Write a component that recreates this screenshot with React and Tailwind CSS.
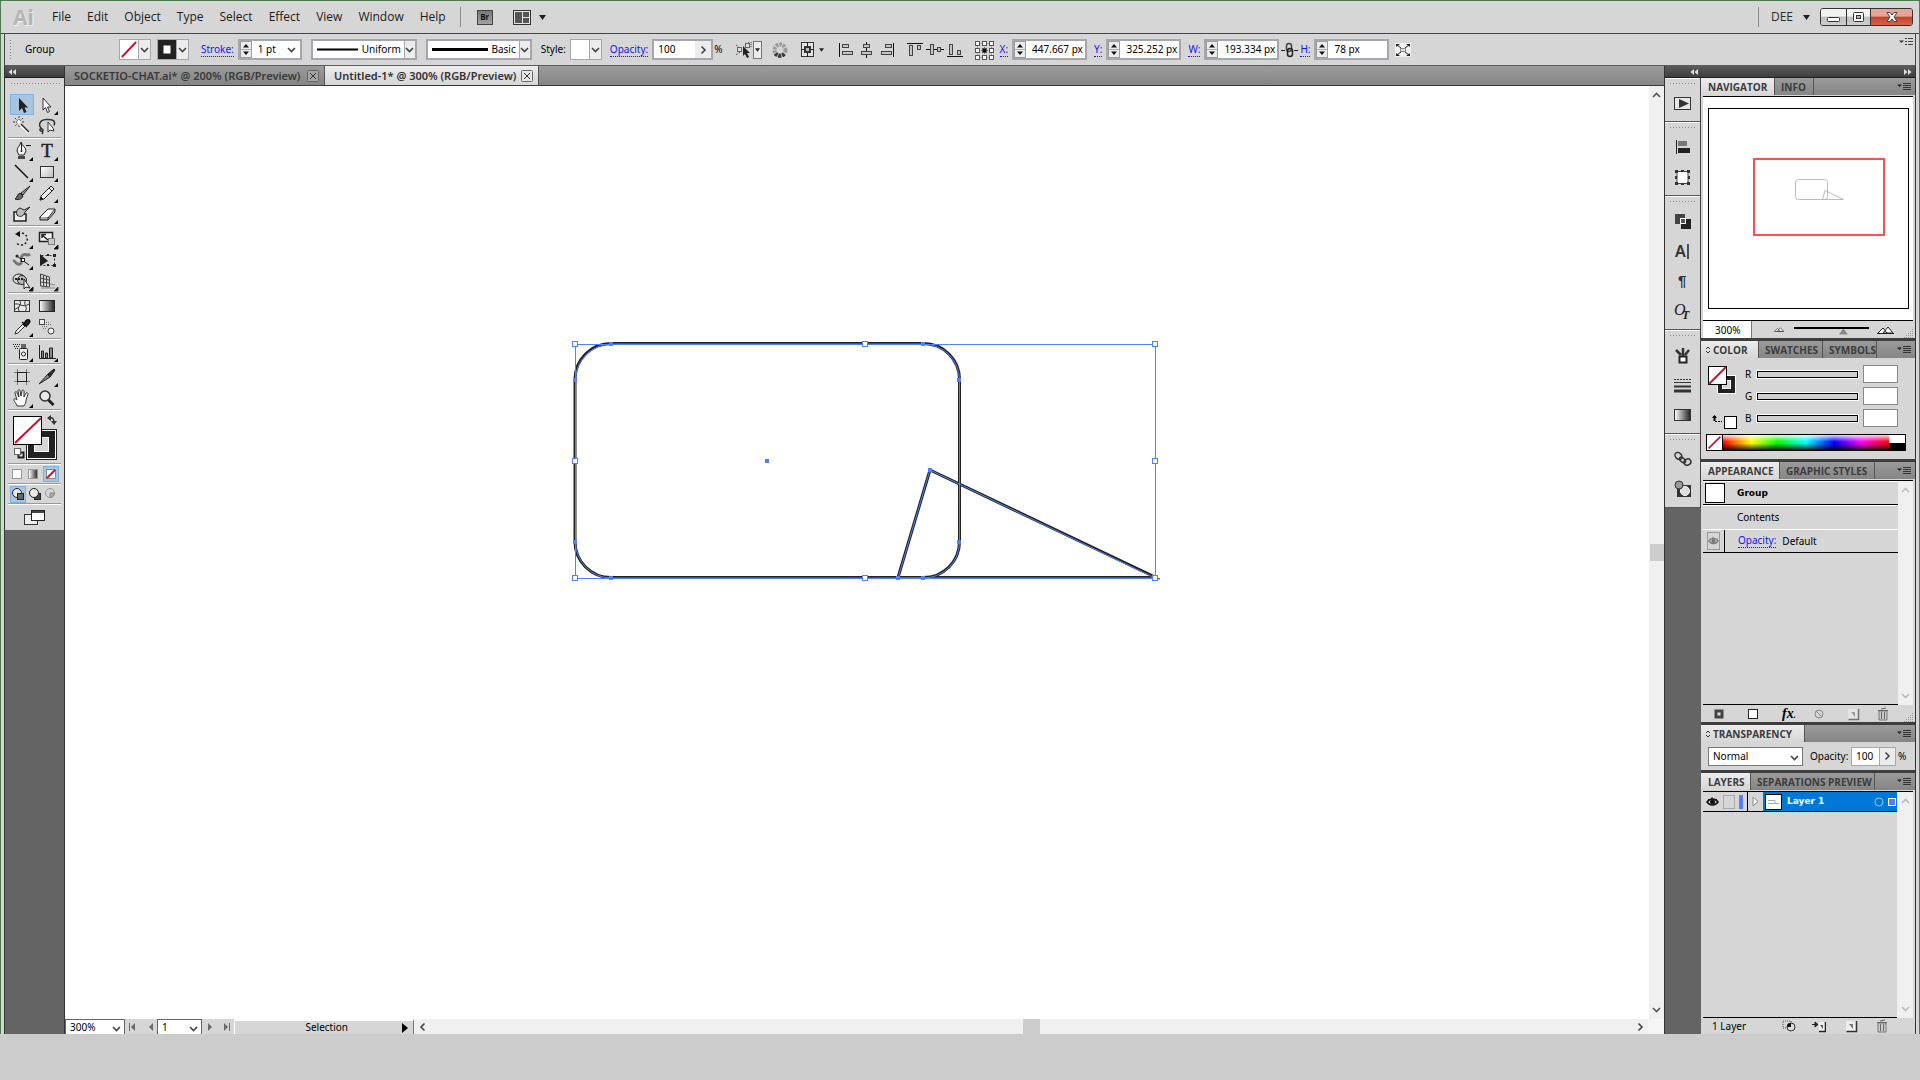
import React, { useState } from 'react';

const inputBase = 'bg-white border-2 border-[#a6a6ae] h-[21px] text-[10px] text-black outline-none';
const uiFont = "font-['Noto_Sans',sans-serif]";

/* ---------- small shared pieces ---------- */

const Chevron = ({ className = '', color = '#444' }) => (
  <svg width="9" height="6" viewBox="0 0 9 6" className={className} fill="none">
    <path d="M1 1l3.500 3.500L8 1" stroke={color} strokeWidth="1.600" />
  </svg>
);

const Caret = ({ small, className = '' }) => (
  <svg width={small ? 5 : 7} height={small ? 4 : 5} viewBox="0 0 7 5" className={className}>
    <path d="M0 0h7L3.500 5z" fill="#222" />
  </svg>
);

const Grip = ({ className = '' }) => (
  <div className={`bg-[radial-gradient(circle,#8c8c8c_1px,transparent_1px)] bg-[length:3px_3px] ${className}`}></div>
);

const PanelLabel = ({ children, htmlFor, className = '' }) => (
  <label htmlFor={htmlFor} className={`text-[10px] leading-[13px] text-[#1414f0] border-b border-dotted border-[#1414f0] ${className}`}>
    {children}
  </label>
);

const Spinner = () => (
  <span className="w-3 h-[17px] bg-[#ececec] border border-[#9c9ca0] shrink-0 flex">
    <svg viewBox="0 0 10 15" className="w-full h-full">
      <path d="M0 7.500h10" stroke="#b0b0b0" />
      <path d="M2 5.500h6L5 2zM2 9.500h6L5 13z" fill="#111" />
    </svg>
  </span>
);

const NumberField = ({ id, label, value }) => (
  <div className="flex items-center gap-1">
    <PanelLabel htmlFor={id}>{label}</PanelLabel>
    <div className={`${inputBase} w-[75px] flex items-center`}>
      <Spinner />
      <input id={id} defaultValue={value} className="w-0 flex-1 pl-1.5 outline-none" />
    </div>
  </div>
);

const DropButton = ({ label, children }) => (
  <button aria-label={label} className="w-8 h-[21px] bg-white border border-[#a6a6ae] flex">
    <span className="w-[19px] h-full border-r border-[#a6a6ae]">{children}</span>
    <span className="flex-1 h-full bg-[#ececec] flex items-center justify-center">
      <Chevron />
    </span>
  </button>
);

const StrokeCombo = ({ label, option, weight, lineWidth }) => (
  <div className="relative w-[106px] h-[21px] ml-[9px]">
    <select aria-label={label} className="appearance-none w-full h-full bg-white border-2 border-[#a6a6ae] text-[10px] text-right pr-3.5 outline-none">
      <option>{option}</option>
    </select>
    <svg width="62" height="5" className="absolute left-1.5 top-2 pointer-events-none">
      <path d={`M0 2.500h${lineWidth}`} stroke="#000" strokeWidth={weight} />
    </svg>
    <span className="absolute right-0.5 top-0.5 w-[11px] h-[17px] bg-[#ececec] border-l border-[#a6a6ae] flex items-center justify-center pointer-events-none">
      <Chevron />
    </span>
  </div>
);

const Separator = ({ className = '' }) => (
  <div className={`h-0.5 border-t border-[#9a9a9a] bg-white shrink-0 ${className}`}></div>
);

const Flyout = () => <path d="M22 16v4h-4z" fill="#000" />;

/* ---------- toolbox icons, 22 x 20 ---------- */

const toolIcons = {
  selection: <path d="M8 3v13l3-3 2 5 2.500-1-2-4.500H17z" fill="#222" />,
  direct: (
    <g>
      <path d="M7 3v12l2.500-2.500 2 5 2-1-2-4.500H15z" fill="#fff" stroke="#333" />
      <Flyout />
    </g>
  ),
  wand: (
    <g fill="none">
      <path d="M8 0v12M2 6h12M4 2l8 8M12 2l-8 8" stroke="#333" strokeDasharray="2 1" />
      <circle cx="8" cy="6" r="2" fill="#fff" />
      <path d="M9 8l9 9" stroke="#fff" strokeWidth="3" />
      <path d="M10 8l8 8" stroke="#222" strokeWidth="1.500" />
    </g>
  ),
  lasso: (
    <g fill="none" stroke="#333">
      <path d="M6 13C2 10 3 4 10 3.500S20 5 18 9.500M6 13c-2-1-3 1-1 2s3-1 1-2M5 15c2 0 2 2 1 3" strokeWidth="1.500" />
      <path d="M12 6v10l2-2 4 1-1-3z" fill="#fff" />
    </g>
  ),
  pen: (
    <g>
      <path d="M10 1c-1 4-4 5-4 9l2 4h5l2-4c0-4-4-5-5-9z" fill="#f4f4f4" stroke="#222" />
      <path d="M10.500 2v7" stroke="#222" />
      <circle cx="10.500" cy="10" r="1" fill="#222" />
      <path d="M7 15h7v3H7z" fill="#444" />
      <path d="M15 4.500h5" stroke="#111" />
      <Flyout />
    </g>
  ),
  type: (
    <g>
      <text x="11" y="16" textAnchor="middle" fontFamily="Liberation Serif" fontSize="19" fill="#222" stroke="#222" strokeWidth="0.500">T</text>
      <Flyout />
    </g>
  ),
  line: (
    <g>
      <path d="M4 3l13 13" stroke="#111" strokeWidth="1.500" />
      <Flyout />
    </g>
  ),
  rect: (
    <g>
      <rect x="4.500" y="4.500" width="13" height="11" fill="url(#toolShade)" stroke="#333" />
      <Flyout />
    </g>
  ),
  brush: (
    <g>
      <path d="M19 3l-9 7 2 2z" fill="#999" stroke="#222" />
      <path d="M9 10l3 3c-1 4-6 4-8 3 2-1 2-5 5-6z" fill="#666" stroke="#222" />
    </g>
  ),
  pencil: (
    <g>
      <path d="M4 17l1-4L15 3l3 3L8 16z" fill="#eee" stroke="#222" />
      <path d="M4 17l1-3 2 2zM13 5l3 3" fill="#111" stroke="#222" />
      <Flyout />
    </g>
  ),
  blob: (
    <g>
      <path d="M3 8h6v2h6v7H3z" fill="#eee" stroke="#222" strokeWidth="1.500" />
      <path d="M9 4c-3 1-4 4-3 7 3 3 7 1 8-3l5-5-6 3z" fill="#bbb" stroke="#222" />
    </g>
  ),
  eraser: (
    <g>
      <path d="M4 13l8-8h7l-7 9H4z" fill="#fff" stroke="#222" />
      <path d="M4 13v3h8v-3M12 16l7-8V5" fill="#aaa" stroke="#222" />
      <Flyout />
    </g>
  ),
  rotate: (
    <g fill="none">
      <path d="M7 5a6 6 0 1 1-2 8" stroke="#222" strokeWidth="1.500" strokeDasharray="2 2" />
      <path d="M4 5l5-3v6z" fill="#111" />
      <Flyout />
    </g>
  ),
  scale: (
    <g fill="none" stroke="#222">
      <rect x="3.500" y="3.500" width="13" height="9" fill="#f2f2f2" strokeWidth="1.500" />
      <rect x="12.500" y="9.500" width="6" height="6" fill="#ccc" stroke="#777" />
      <path d="M6 6l6 5M6 9V5.500h4" strokeWidth="1.500" />
      <Flyout />
    </g>
  ),
  warp: (
    <g fill="none">
      <path d="M2 11c3-1 3 5 7 3s-1-7 3-9 3 2 7-1" stroke="#777" strokeWidth="3" />
      <path d="M6 6l12 9" stroke="#111" />
      <rect x="10.500" y="8.500" width="3" height="3" fill="#fff" stroke="#222" />
      <circle cx="6" cy="6" r="1.500" fill="#222" />
      <Flyout />
    </g>
  ),
  transform: (
    <g>
      <rect x="5.500" y="5.500" width="13" height="10" fill="none" stroke="#333" strokeDasharray="2 2" />
      <path d="M17 4h3v3h-3zM17 14h3v3h-3zM11 4h2v2h-2zM11 14h2v2h-2z" fill="#222" />
      <path d="M4 4v12l8-5z" fill="#222" />
    </g>
  ),
  builder: (
    <g fill="none" stroke="#222">
      <ellipse cx="8" cy="8" rx="6" ry="5" fill="#ddd" />
      <circle cx="11" cy="9" r="4.500" fill="#bbb" />
      <path d="M4 8h9" strokeWidth="2" strokeDasharray="2 1" />
      <path d="M13 8v10l2-2 4 1z" fill="#fff" />
      <Flyout />
    </g>
  ),
  perspective: (
    <g fill="none" stroke="#444">
      <path d="M4.500 3v12l9 1V6zM7.500 4v11M10.500 5v11M4 7l9 2M4 11l9 1" />
      <path d="M5 17h14M14 13l5 1" stroke="#888" />
      <Flyout />
    </g>
  ),
  mesh: (
    <g fill="none" stroke="#333">
      <rect x="3.500" y="4.500" width="15" height="11" fill="#e8e8e8" />
      <path d="M3 9c4-4 8 4 15-1M8 4c5 5-4 7 1 12M15 4c-4 5 3 6-1 12M3 14l5-3" />
    </g>
  ),
  gradient: <rect x="3.500" y="4.500" width="15" height="11" fill="url(#toolGradient)" stroke="#222" />,
  dropper: (
    <g>
      <path d="M4 17l1-3 7-7 2 2-7 7z" fill="#eee" stroke="#333" />
      <path d="M11 5l5 5M13 8c0-3 3-6 5-5s0 4-3 6z" fill="#222" stroke="#111" strokeWidth="1.500" />
      <Flyout />
    </g>
  ),
  blend: (
    <g>
      <rect x="3.500" y="2.500" width="5" height="5" fill="#eee" stroke="#444" />
      <path d="M6 9.500h6M7 11.500h4M10 5.500h3M10 7.500h5" stroke="#777" strokeDasharray="1 1" />
      <circle cx="15" cy="14" r="3" fill="#eee" stroke="#444" />
    </g>
  ),
  spray: (
    <g>
      <path d="M2 2.500h7M3 4.500h6M4 6.500h4" stroke="#222" strokeDasharray="1 1" />
      <rect x="8.500" y="6.500" width="8" height="11" rx="1" fill="#eee" stroke="#222" />
      <rect x="10" y="2" width="5" height="4" fill="#666" />
      <circle cx="12.500" cy="12" r="2" fill="#fff" stroke="#222" />
      <Flyout />
    </g>
  ),
  graph: (
    <g>
      <path d="M3.500 3v13.500H20" fill="none" stroke="#222" />
      <path d="M5.500 9h2v7h-2zM9.500 11h2v5h-2zM13.500 6h3v10h-3z" fill="#888" stroke="#222" />
      <Flyout />
    </g>
  ),
  artboard: (
    <g fill="none">
      <rect x="6.500" y="5.500" width="9" height="9" stroke="#222" />
      <path d="M6.500 2v3M15.500 2v3M6.500 15v3M15.500 15v3M3 5.500h3M3 14.500h3M16 5.500h3M16 14.500h3" stroke="#777" />
    </g>
  ),
  slice: (
    <g>
      <path d="M3 17L12 7l2 3z" fill="#888" stroke="#222" />
      <path d="M12 7l6-5 1 1-5 7z" fill="#333" stroke="#111" />
      <Flyout />
    </g>
  ),
  hand: (
    <g>
      <path d="M6 18c-1-3-4-6-3-7s3 1 3 1L4 5c0-2 2-2 2 0l2 4-1-6c0-2 2-2 2 0l1 5 1-5c0-2 2-1 2 0v6l2-4c1-1 2 0 2 1l-2 6c0 3-1 4-2 6z" fill="#fff" stroke="#333" />
      <Flyout />
    </g>
  ),
  zoom: (
    <g fill="none">
      <circle cx="9" cy="8" r="5" fill="#e8e8e8" stroke="#333" strokeWidth="1.500" />
      <path d="M12.500 12l5 5" stroke="#222" strokeWidth="3" />
    </g>
  ),
};

const toolGroups = [
  ['selection', 'direct', 'wand', 'lasso'],
  ['pen', 'type', 'line', 'rect', 'brush', 'pencil', 'blob', 'eraser'],
  ['rotate', 'scale', 'warp', 'transform', 'builder', 'perspective'],
  ['mesh', 'gradient', 'dropper', 'blend'],
  ['spray', 'graph'],
  ['artboard', 'slice', 'hand', 'zoom'],
];

/* ---------- menu bar ---------- */

const menus = ['File', 'Edit', 'Object', 'Type', 'Select', 'Effect', 'View', 'Window', 'Help'];

const MenuBar = () => (
  <header className="h-[33px] border-b border-[#46464a] flex items-center pl-3 pr-1.5 font-['Open_Sans',sans-serif]">
    <span className="w-8 text-[21px] leading-none font-bold text-[#b4b4b4] [text-shadow:1px_1px_0_#f0f0f0]">Ai</span>
    <nav className="flex ml-[7px] gap-4 text-[12px] leading-4 text-[#1c1c1c]">
      {menus.map((name) => (
        <button key={name}>{name}</button>
      ))}
    </nav>
    <div className="w-px h-5 bg-[#8e8e8e] ml-3.5"></div>
    <button className="ml-4 w-4 h-[15px] bg-[linear-gradient(#777,#a2a2a2)] border border-[#444] text-[8px] leading-none font-bold text-[#111]">Br</button>
    <button aria-label="Arrange documents" className="ml-5 flex items-center gap-2">
      <svg width="18" height="15" viewBox="0 0 18 15">
        <rect x="0.500" y="0.500" width="17" height="14" fill="#e4e4e4" stroke="#333" />
        <path d="M2 2h7v11H2zM10 2h6v5h-6zM10 8h6v5h-6z" fill="#555" />
      </svg>
      <Caret />
    </button>
    <div className="flex-1"></div>
    <div className="w-px h-5 bg-[#8e8e8e]"></div>
    <button className="ml-3 flex items-center gap-2.5 text-[12px] leading-4 text-[#2c2c2c]">
      DEE <Caret />
    </button>
    <div className="ml-2.5 h-[18px] flex border border-[#333] rounded-[3px] overflow-hidden">
      <button aria-label="Minimize" className="w-[25px] bg-[linear-gradient(#f2f2f2_45%,#bdbdbd_50%,#d0d0d0)] flex items-center justify-center">
        <svg width="13" height="14"><rect x="0.500" y="7.500" width="12" height="4" rx="1" fill="#fff" stroke="#333" /></svg>
      </button>
      <button aria-label="Restore" className="w-[25px] border-x border-[#333] bg-[linear-gradient(#f2f2f2_45%,#bdbdbd_50%,#d0d0d0)] flex items-center justify-center">
        <svg width="13" height="12">
          <rect x="1.500" y="1.500" width="10" height="9" rx="1" fill="#fff" stroke="#333" />
          <rect x="4.500" y="4.500" width="4" height="3" fill="#bbb" stroke="#333" />
        </svg>
      </button>
      <button aria-label="Close" className="w-[41px] bg-[linear-gradient(#e9a493_45%,#c4422c_50%,#d4634a)] flex items-center justify-center">
        <svg width="14" height="12" viewBox="0 0 14 12">
          <path d="M2 1.500h3l2 2.500 2-2.500h3L9 6l3 4.500H9L7 8l-2 2.500H2L5 6z" fill="#fff" stroke="#444" />
        </svg>
      </button>
    </div>
  </header>
);

/* ---------- control bar ---------- */

const NoneLine = () => (
  <svg viewBox="0 0 19 19" preserveAspectRatio="none" className="w-full h-full">
    <path d="M2 17L17 2" stroke="#c8102e" strokeWidth="2" />
  </svg>
);

const AlignIcon = ({ kind }) => {
  const shapes = {
    left: ['M1.500 2v14', [4, 3, 7, 4], [4, 10, 11, 4]],
    hcenter: ['M8.500 1v16', [5, 3, 7, 4], [3, 10, 11, 4]],
    right: ['M15.500 2v14', [7, 3, 7, 4], [3, 10, 11, 4]],
    top: ['M1 2.500h16', [3, 4, 4, 11], [11, 4, 4, 5]],
    vcenter: ['M0 8.500h18', [4, 3, 4, 11], [11, 6, 4, 5]],
    bottom: ['M1 15.500h16', [3, 3, 4, 11], [11, 9, 4, 5]],
  };
  const [line, a, b] = shapes[kind];
  return (
    <button aria-label={`Align ${kind}`}>
      <svg width="18" height="18" viewBox="0 0 18 18">
        <path d={line} stroke="#111" />
        {[a, b].map(([x, y, w, h], i) => (
          <rect key={i} x={x + 0.5} y={y + 0.5} width={w - 1} height={h - 1} fill="#c4c4c4" stroke="#444" />
        ))}
      </svg>
    </button>
  );
};

const refPoints = [1, 8, 15];

const ControlBar = () => (
  <div className={`h-8 border-b border-[#5c5c5c] border-l border-l-[#46464a] border-r border-r-[#46464a] mx-[3px] flex items-center text-[10px] leading-[13px] text-black ${uiFont}`}>
    <Grip className="w-[3px] h-[21px] ml-1" />
    <span className="w-[94px] ml-[13px]">Group</span>
    <DropButton label="Fill"><NoneLine /></DropButton>
    <div className="w-1.5"></div>
    <DropButton label="Stroke color">
      <svg viewBox="0 0 18 19" className="w-full h-full">
        <rect width="18" height="19" fill="#222" />
        <rect x="5.500" y="5.500" width="7" height="8" fill="#fff" />
      </svg>
    </DropButton>
    <PanelLabel htmlFor="stroke" className="ml-3">Stroke:</PanelLabel>
    <div className={`${inputBase} w-16 ml-1 flex items-center relative`}>
      <Spinner />
      <select id="stroke" className="appearance-none flex-1 pl-1.5 outline-none">
        <option>1 pt</option>
      </select>
      <Chevron className="absolute right-1 pointer-events-none" />
    </div>
    <StrokeCombo label="Width profile" option="Uniform" weight="2" lineWidth={41} />
    <StrokeCombo label="Brush definition" option="Basic" weight="3" lineWidth={56} />
    <span className="ml-[9px] mr-1">Style:</span>
    <DropButton label="Graphic style" />
    <PanelLabel htmlFor="opacity" className="ml-2">Opacity:</PanelLabel>
    <div className={`${inputBase} w-[61px] ml-1 flex items-center`}>
      <input id="opacity" defaultValue="100" className="w-0 flex-1 pl-1 outline-none" />
      <button aria-label="Opacity slider" className="w-4 h-full bg-[#ececec] flex items-center justify-center">
        <Chevron className="-rotate-90" />
      </button>
    </div>
    <span className="ml-px">%</span>

    <button aria-label="Select similar" className="ml-3 flex items-center">
      <svg width="18" height="18" viewBox="0 0 18 18">
        <path d="M1 4l4 3M13 1l2 2M1 14l4-3M16 1v5" stroke="#333" strokeDasharray="1 1" />
        <rect x="2.500" y="6.500" width="4" height="4" fill="#ddd" stroke="#666" />
        <rect x="10.500" y="2.500" width="4" height="4" fill="#ddd" stroke="#666" />
        <path d="M8 5v10l2-2 2 4 2-1-2-4h3z" fill="#222" />
      </svg>
      <span className="w-[9px] h-[18px] border border-[#777] bg-[#ececec] flex items-center justify-center"><Caret small /></span>
    </button>
    <button aria-label="Recolor artwork" className="ml-2.5">
      <svg width="16" height="16" viewBox="0 0 16 16">
        <circle cx="8" cy="8" r="5.500" fill="none" stroke="#999" strokeWidth="4" strokeDasharray="2.500 1" />
        <path d="M3.500 11.500a5.500 5.500 0 0 0 9 0" fill="none" stroke="#333" strokeWidth="4" strokeDasharray="2.500 1" />
      </svg>
    </button>
    <button aria-label="Align to" className="ml-3 flex items-center gap-1">
      <svg width="15" height="17" viewBox="0 0 15 17">
        <rect x="1.500" y="1.500" width="12" height="14" fill="#e4e4e4" stroke="#333" />
        <rect x="5" y="6" width="5" height="5" fill="#bbb" stroke="#333" strokeWidth="2" />
        <path d="M7.500 1v4M7.500 12v4M1 8.500h3M11 8.500h3" stroke="#222" />
      </svg>
      <Caret small />
    </button>
    <div className="flex ml-3.5 gap-0.5">
      <AlignIcon kind="left" />
      <AlignIcon kind="hcenter" />
      <AlignIcon kind="right" />
    </div>
    <div className="flex ml-2.5 gap-0.5">
      <AlignIcon kind="top" />
      <AlignIcon kind="vcenter" />
      <AlignIcon kind="bottom" />
    </div>
    <button aria-label="Reference point" className="ml-2.5 mr-1.5">
      <svg width="20" height="20" viewBox="0 0 20 20">
        <path d="M3.500 3.500h14v14h-14zM3 10.500h15M10.500 3v15" fill="none" stroke="#777" strokeDasharray="1 1" />
        {refPoints.map((y) =>
          refPoints.map((x) => (
            <rect key={`${x}-${y}`} x={x + 0.5} y={y + 0.5} width="4" height="4" fill={x === 8 && y === 8 ? '#000' : '#fff'} stroke="#555" />
          ))
        )}
      </svg>
    </button>
    <div className="flex items-center gap-[7px]">
      <NumberField id="pos-x" label="X:" value="447.667 px" />
      <NumberField id="pos-y" label="Y:" value="325.252 px" />
      <NumberField id="size-w" label="W:" value="193.334 px" />
    </div>
    <button aria-label="Constrain proportions" className="mx-0.5">
      <svg width="17" height="16" viewBox="0 0 17 16" fill="none">
        <path d="M0 8.500h4M13 8.500h4" stroke="#222" />
        <rect x="5.500" y="1.500" width="5" height="8" rx="2.500" stroke="#444" strokeWidth="1.500" />
        <rect x="6.500" y="6.500" width="5" height="8" rx="2.500" stroke="#222" strokeWidth="1.500" />
      </svg>
    </button>
    <NumberField id="size-h" label="H:" value="78 px" />
    <button aria-label="Isolate" className="ml-1.5 w-4 h-[14px] bg-[#f2f2f2]">
      <svg width="16" height="14" viewBox="0 0 16 14">
        <path d="M2 2l4 3M14 2l-4 3M2 12l4-3M14 12l-4-3" stroke="#222" />
        <path d="M1 1h4L1 4zM15 1h-4l4 3zM1 13h4l-4-3zM15 13h-4l4-3z" fill="#222" />
        <rect x="5.500" y="5.500" width="5" height="3" fill="#ddd" stroke="#888" />
      </svg>
    </button>
    <div className="flex-1"></div>
    <button aria-label="Control bar menu" className="self-start mt-1 mr-0.5">
      <svg width="14" height="8" viewBox="0 0 14 8">
        <path d="M0 2.500h5L2.500 5z" fill="#333" />
        <path d="M6 0.500h2M6 3.500h2M6 6.500h2M9 0.500h5M9 3.500h5M9 6.500h5" stroke="#444" />
      </svg>
    </button>
  </div>
);

/* ---------- toolbox ---------- */

const CollapseBar = ({ right, className = '' }) => (
  <div className={`h-3 shrink-0 bg-[linear-gradient(#5c5c5c,#3e3e3e)] border-b border-[#1e1e1e] flex items-center ${className}`}>
    <button aria-label="Collapse panel">
      <svg width="8" height="6" viewBox="0 0 8 6" className={right ? 'rotate-180' : ''}>
        <path d="M4 0v6L0.500 3zM8 0v6L4.500 3z" fill="#ddd" />
      </svg>
    </button>
  </div>
);

const Toolbox = () => {
  const [active, setActive] = useState('selection');

  return (
    <aside className="w-[61px] shrink-0 border-x border-[#333] bg-[#646464] flex flex-col">
      <CollapseBar className="pl-[3px]" />
      <div className="bg-[#d6d6d6] px-[5px] pt-1 pb-1">
        <Grip className="h-[3px] w-[51px] mb-[9px]" />
        {toolGroups.map((group, i) => (
          <div key={i}>
            {i > 0 && <Separator className="-mx-0.5 my-px" />}
            <div className="grid grid-cols-[24px_24px] gap-x-px">
              {group.map((name) => (
                <button
                  key={name}
                  aria-label={name}
                  onClick={() => setActive(name)}
                  className={`h-[21px] flex items-center justify-center ${active === name ? 'bg-[#a9c4de] outline outline-1 -outline-offset-1 outline-[#7cb4e8]' : ''}`}
                >
                  <svg width="22" height="20" viewBox="0 0 22 20" className="overflow-visible">{toolIcons[name]}</svg>
                </button>
              ))}
            </div>
          </div>
        ))}
        <Separator className="-mx-0.5 my-px" />
        <button aria-label="Fill and stroke" className="block">
          <svg width="49" height="51" viewBox="10 412 49 51">
            <rect x="26.500" y="429.500" width="30" height="30" fill="#222" stroke="#222" />
            <rect x="27.500" y="430.500" width="28" height="28" fill="none" stroke="#fff" />
            <rect x="34.500" y="437.500" width="14" height="14" fill="#d6d6d6" stroke="#fff" />
            <rect x="13.500" y="416.500" width="28" height="28" fill="#fff" stroke="#000" />
            <path d="M15 443l26-25" stroke="#c8102e" strokeWidth="2" />
            <path d="M49 418c4-1 5 1 5 5" fill="none" stroke="#333" strokeWidth="1.500" />
            <path d="M47 418l4-3v6zM51 421h6l-3 4z" fill="#333" />
            <rect x="18.500" y="452.500" width="5" height="5" fill="#ddd" stroke="#222" strokeWidth="2" />
            <rect x="14.500" y="448.500" width="6" height="6" fill="#fff" stroke="#666" />
          </svg>
        </button>
        <Separator className="-mx-0.5" />
        <div className="flex justify-between items-center h-[18px] pl-0.5">
          <button aria-label="Color" className="w-[10px] h-[10px] bg-white border border-[#999]"></button>
          <button aria-label="Gradient" className="w-[10px] h-[10px] bg-linear-to-r from-white to-[#333] border border-[#999]"></button>
          <button aria-label="None" className="w-4 h-4 bg-[#a9c4de] border border-[#7cb4e8] flex items-center justify-center">
            <svg width="10" height="10"><rect x="0.500" y="0.500" width="9" height="9" fill="#fff" stroke="#888" /><path d="M1 9l8-8" stroke="#c8102e" strokeWidth="2" /></svg>
          </button>
        </div>
        <Separator className="-mx-0.5" />
        <div className="flex items-center h-[18px] gap-px">
          {['#e8e8e8', '#e8e8e8', '#d6d6d6'].map((fill, i) => (
            <button key={i} aria-label={`Draw mode ${i + 1}`} className={`w-4 h-[17px] flex items-center justify-center ${i === 0 ? 'bg-[#a9c4de] outline outline-1 -outline-offset-1 outline-[#7cb4e8]' : ''}`}>
              <svg width="14" height="14" viewBox="0 0 14 14">
                {i === 1 && <rect x="6.500" y="6.500" width="6" height="6" fill="#444" stroke="#222" />}
                <circle cx="6" cy="6" r="4.500" fill={fill} stroke={i === 2 ? '#999' : '#222'} />
                {i === 0 && <rect x="6.500" y="6.500" width="6" height="6" fill="#666" stroke="#222" />}
                {i === 2 && <path d="M6 6h4.500A4.500 4.500 0 0 1 6 10.500z" fill="#aaa" stroke="#888" />}
              </svg>
            </button>
          ))}
        </div>
        <Separator className="-mx-0.5" />
        <button aria-label="Screen mode" className="w-full h-[21px] flex items-end justify-center">
          <svg width="22" height="17" viewBox="0 0 22 17">
            <rect x="0.500" y="5.500" width="13" height="10" fill="#eee" stroke="#333" />
            <rect x="7.500" y="1.500" width="13" height="10" fill="#fff" stroke="#222" />
            <path d="M8 3h12" stroke="#444" strokeWidth="2" />
          </svg>
        </button>
      </div>
    </aside>
  );
};

/* ---------- document window ---------- */

const docs = [
  { name: 'SOCKETIO-CHAT.ai* @ 200% (RGB/Preview)', width: 'w-[260px]' },
  { name: 'Untitled-1* @ 300% (RGB/Preview)', width: 'w-[214px]' },
];

const DocTabs = () => (
  <div className="h-5 shrink-0 bg-[linear-gradient(#9b9b9b,#858585)] border-b border-[#3a3a3a] flex font-['Noto_Sans',sans-serif]">
    {docs.map((doc, i) => (
      <div
        key={doc.name}
        className={`${doc.width} pl-[9px] pr-[5px] border-r border-[#555] flex items-center justify-between text-[11px] leading-4 font-semibold ${i === 1 ? 'bg-[linear-gradient(#ececec,#d6d6d6)] text-[#333]' : 'text-[#3a3a3a]'}`}
      >
        <button className="whitespace-nowrap">{doc.name}</button>
        <button aria-label={`Close ${doc.name}`}>
          <svg width="12" height="12" viewBox="0 0 12 12">
            <rect x="0.500" y="0.500" width="11" height="11" rx="1" fill={i === 1 ? '#e6e6e6' : '#a4a4a4'} stroke="#666" />
            <path d="M3 3l6 6M9 3l-6 6" stroke="#333" />
          </svg>
        </button>
      </div>
    ))}
  </div>
);

const handles = [
  [575, 344], [865, 344], [1155, 344],
  [575, 461], [1155, 461],
  [575, 578], [865, 578], [1155, 578],
];
const anchors = [
  [611, 344], [923, 344], [575, 380], [959, 380], [575, 542], [959, 542],
  [611, 578], [923, 578], [930, 470], [898, 578], [767, 461],
];

const Artwork = () => (
  <svg width="600" height="250" viewBox="565 336 600 250" fill="none" className="absolute left-[500px] top-[250px]">
    <g stroke="#222" strokeWidth="3">
      <rect x="575" y="343.500" width="384.500" height="234" rx="36" />
      <path d="M930 470l-32 107.500h258z" strokeLinejoin="bevel" />
    </g>
    <path d="M1150 577l10 2" stroke="#222" />
    <g stroke="#4f80ff">
      <rect x="575.500" y="344" width="384" height="234" rx="36" />
      <path d="M930 470l-32 108h257z" />
      <rect x="575.500" y="344.500" width="580" height="234" />
    </g>
    {anchors.map(([x, y]) => (
      <rect key={`${x}-${y}`} x={x - 2} y={y - 2} width="4" height="4" fill="#4f80ff" />
    ))}
    {handles.map(([x, y]) => (
      <rect key={`${x}-${y}`} x={x - 2.5} y={y - 2.5} width="5" height="5" fill="#fff" stroke="#4f80ff" />
    ))}
  </svg>
);

const NavIcon = ({ label, d, flip, className = '' }) => (
  <button aria-label={label} className={className}>
    <svg width="8" height="8" viewBox="0 0 8 8" className={flip ? 'rotate-180' : ''}>
      <path d={d} fill="#6a6a6a" />
    </svg>
  </button>
);

const StatusBar = () => (
  <div className={`h-[15px] shrink-0 flex overflow-hidden text-[10px] text-black ${uiFont}`}>
    <div className="relative w-[60px]">
      <select aria-label="Zoom level" className="appearance-none w-full h-full bg-white border border-b-0 border-[#666] pl-1 outline-none leading-[14px]">
        <option>300%</option>
      </select>
      <Chevron className="absolute right-1 top-[7px] pointer-events-none" />
    </div>
    <div className="w-8 flex items-center justify-between pl-1 pr-0.5">
      <NavIcon label="First artboard" d="M0 0h1v8H0zM6 0v8L2 4z" />
      <NavIcon label="Previous artboard" d="M6 0v8L2 4z" />
    </div>
    <div className="relative w-[45px]">
      <select aria-label="Artboard" className="appearance-none w-full h-full bg-white border border-b-0 border-[#666] pl-1 outline-none leading-[14px]">
        <option>1</option>
      </select>
      <Chevron className="absolute right-1 top-[7px] pointer-events-none" />
    </div>
    <div className="w-8 flex items-center justify-between pl-1 pr-1">
      <NavIcon label="Next artboard" d="M6 0v8L2 4z" flip />
      <NavIcon label="Last artboard" d="M0 0h1v8H0zM6 0v8L2 4z" flip />
    </div>
    <button className="w-[180px] border-t-2 border-l border-white border-r border-r-[#777] flex items-center justify-end pr-[5px] gap-[54px] leading-[13px]">
      Selection
      <svg width="6" height="10"><path d="M0 0v10l6-5z" fill="#000" /></svg>
    </button>
    <div className="flex-1 bg-[#f0f0f0] flex items-center">
      <button aria-label="Scroll left" className="w-4 flex justify-center"><Chevron className="rotate-90" /></button>
      <div className="flex-1"></div>
      <div className="w-[17px] h-full bg-[#cdcdcd]"></div>
      <div className="flex-1"></div>
      <button aria-label="Scroll right" className="w-4 flex justify-center"><Chevron className="-rotate-90" /></button>
    </div>
    <div className="w-4 bg-[#f6f6f6]"></div>
  </div>
);

const VerticalScroll = ({ thumb, color = '#555', className = '' }) => (
  <div className={`bg-[#f0f0f0] flex flex-col items-center shrink-0 ${className}`}>
    <button aria-label="Scroll up" className="h-[18px]"><Chevron className="rotate-180" color={color} /></button>
    <div className="flex-1"></div>
    {thumb && <div className="w-[14px] h-[17px] bg-[#cdcdcd]"></div>}
    <div className="flex-1"></div>
    <button aria-label="Scroll down" className="h-[18px]"><Chevron color={color} /></button>
  </div>
);

const DocumentWindow = () => (
  <main className="flex-1 min-w-0 flex flex-col">
    <DocTabs />
    <div className="flex-1 flex">
      <div className="relative flex-1 bg-white overflow-hidden">
        <Artwork />
      </div>
      <VerticalScroll thumb className="w-[15px]" />
    </div>
    <StatusBar />
  </main>
);

/* ---------- collapsed dock ---------- */

const dockIcons = {
  actions: <g><rect x="0.500" y="3.500" width="16" height="12" fill="#e8e8e8" stroke="#333" /><path d="M5 5v9l10-4.500z" fill="#333" /></g>,
  align: <g><path d="M2.500 2v14" stroke="#222" /><path d="M4 3h9v5H4z" fill="#777" /><path d="M4 10h12v5H4z" fill="#222" /></g>,
  transform: <g><rect x="3" y="3.500" width="11" height="12" fill="#fff" stroke="#444" /><path d="M1 2h3v3H1zM7 2h3v2H7zM13 2h3v3h-3zM1 8h2v3H1zM14 8h2v3h-2zM1 14h3v3H1zM7 15h3v2H7zM13 14h3v3h-3z" fill="#333" /></g>,
  pathfinder: <g><path d="M1 2h10v10H1z" fill="#444" /><path d="M7 7h10v10H7z" fill="#222" /><rect x="6.500" y="6.500" width="5" height="5" fill="#555" stroke="#fff" /></g>,
  character: <g><text x="1" y="15" fontFamily="Noto Sans" fontSize="16" fontWeight="600" fill="#333">A</text><path d="M14 2v15" stroke="#222" strokeWidth="1.500" /></g>,
  paragraph: <text x="4" y="14" fontFamily="Liberation Sans" fontSize="15" fontWeight="bold" fill="#333">¶</text>,
  opentype: <g fontFamily="Liberation Serif" fontStyle="italic" fill="#222"><text x="0" y="13" fontSize="16">O</text><text x="8" y="17" fontSize="12" fontWeight="bold">T</text></g>,
  brushes: <g><path d="M9 10V2M7 9L2 4M11 9l4-5" stroke="#333" strokeWidth="2.500" /><rect x="5.500" y="10.500" width="7" height="6" fill="#fff" stroke="#222" strokeWidth="2" /></g>,
  stroke: <g stroke="#333"><path d="M0 3.500h17" strokeDasharray="2 1" /><path d="M0 6.500h17" /><path d="M0 10.500h17" strokeWidth="2" /><path d="M0 15h17" strokeWidth="3" /></g>,
  gradient: <rect x="0.500" y="3.500" width="16" height="11" fill="url(#toolGradient)" stroke="#333" />,
  links: <g fill="none" stroke="#333" strokeWidth="1.500"><ellipse cx="4.500" cy="6" rx="3" ry="4" transform="rotate(-45 4.500 6)" /><ellipse cx="8.500" cy="10" rx="2" ry="3.500" transform="rotate(-50 8.500 10)" /><ellipse cx="13.500" cy="12" rx="3.500" ry="3" transform="rotate(-30 13.500 12)" /></g>,
  symbols: <g><path d="M3 5h14v12H3z" fill="#333" /><circle cx="11" cy="11" r="4.500" fill="#ddd" stroke="#fff" /><circle cx="5" cy="5" r="4" fill="#999" stroke="#333" /></g>,
};

const dockGroups = [
  ['actions'],
  ['align', 'transform'],
  ['pathfinder', 'character', 'paragraph', 'opentype'],
  ['brushes', 'stroke', 'gradient'],
  ['links', 'symbols'],
];

const IconDock = () => (
  <aside className="w-[36px] shrink-0 bg-[#646464] flex flex-col">
    <div className="border-r border-[#444]">
      {dockGroups.map((group, i) => (
        <div key={i} className="bg-[#d6d6d6] border-t border-white border-b border-b-[#555] pt-[3px] pb-[3px]">
          <Grip className="w-[27px] h-[3px] mx-auto mb-[3px]" />
          {group.map((name) => (
            <button key={name} aria-label={name} className="h-[30px] w-full flex items-center justify-center">
              <svg width="17" height="19" viewBox="0 0 17 19" className="overflow-visible">{dockIcons[name]}</svg>
            </button>
          ))}
        </div>
      ))}
    </div>
  </aside>
);

/* ---------- right panels ---------- */

const PanelTabs = ({ tabs, sortable }) => (
  <div className="h-[17px] shrink-0 bg-[linear-gradient(#9b9b9b,#858585)] flex font-['Open_Sans',sans-serif] text-[10px] leading-[14px] font-bold text-[#3c3c3c]">
    {tabs.map(([name, width], i) => (
      <button
        key={name}
        className={`${width} h-full whitespace-nowrap border-r border-[#555] flex items-center ${sortable && i === 0 ? 'gap-0.5 pl-1' : i === 0 ? 'pl-[7px]' : 'pl-1.5'} ${i === 0 ? 'bg-[linear-gradient(#ececec,#d6d6d6)]' : ''}`}
      >
        {sortable && i === 0 && (
          <svg width="6" height="8" viewBox="0 0 6 8" fill="none" stroke="#333"><path d="M1 3l2-2 2 2M1 5l2 2 2-2" /></svg>
        )}
        {name}
      </button>
    ))}
    <button aria-label={`${tabs[0][0]} panel menu`} className="ml-auto mr-1 flex items-center">
      <svg width="14" height="9" viewBox="0 0 14 9">
        <path d="M0 2.500h5L2.500 5z" fill="#222" />
        <path d="M6 1.500h8M6 3.500h8M6 5.500h8M6 7.500h8" stroke="#333" />
      </svg>
    </button>
  </div>
);

const Divider = () => <div className="h-[3px] shrink-0 bg-[#3e3e3e]"></div>;

const Resizer = () => (
  <svg width="9" height="9" viewBox="0 0 9 9" fill="#999">
    <path d="M8 0h1v1H8zM6 2h1v1H6zM8 2h1v1H8zM4 4h1v1H4zM6 4h1v1H6zM8 4h1v1H8zM2 6h1v1H2zM4 6h1v1H4zM6 6h1v1H6zM8 6h1v1H8zM0 8h1v1H0zM2 8h1v1H2zM4 8h1v1H4zM6 8h1v1H6zM8 8h1v1H8z" />
  </svg>
);

const Mountains = ({ width, height }) => (
  <svg width={width} height={height} viewBox="0 0 17 8" fill="#fff" stroke="#222">
    <path d="M1 7l5-5 4 5M6 7l5-6 5 6z" />
    <path d="M0 7.500h17" />
  </svg>
);

const NavigatorPanel = () => (
  <section>
    <PanelTabs tabs={[['NAVIGATOR', 'w-[74px]'], ['INFO', 'w-[39px]']]} />
    <div className="mt-px mx-0.5 border-y border-black bg-white pl-[5px] pr-1 py-[11px]">
      <svg viewBox="0 0 201 201" className="block w-full" fill="none">
        <rect x="0.500" y="0.500" width="200" height="200" stroke="#000" />
        <rect x="46" y="51" width="130" height="76" stroke="#fa5050" strokeWidth="2" />
        <rect x="87.500" y="71.500" width="32" height="20" rx="3" stroke="#bbb" />
        <path d="M117 82.500l-2.500 9h21z" stroke="#bbb" />
      </svg>
    </div>
    <div className="h-[17px] flex items-center ml-0.5">
      <input aria-label="Navigator zoom" defaultValue="300%" className="w-[49px] h-full bg-white border-r border-[#777] pl-3 outline-none" />
      <button aria-label="Zoom out" className="ml-[22px]"><Mountains width="10" height="5" /></button>
      <input
        type="range"
        aria-label="Zoom slider"
        min="0"
        max="100"
        defaultValue="68"
        className="appearance-none ml-2.5 w-[75px] h-2.5 bg-[linear-gradient(transparent_2px,#000_2px,#000_4px,transparent_4px)] [&::-webkit-slider-thumb]:appearance-none [&::-webkit-slider-thumb]:mt-1 [&::-webkit-slider-thumb]:w-[9px] [&::-webkit-slider-thumb]:h-1.5 [&::-webkit-slider-thumb]:bg-[#888] [&::-webkit-slider-thumb]:[clip-path:polygon(50%_0,100%_100%,0_100%)]"
      />
      <button aria-label="Zoom in" className="ml-2"><Mountains width="17" height="8" /></button>
      <div className="ml-auto mr-0.5 self-end"><Resizer /></div>
    </div>
  </section>
);

const channels = ['R', 'G', 'B'];

const ColorPanel = () => (
  <section className="pb-2">
    <PanelTabs sortable tabs={[['COLOR', 'w-[58px]'], ['SWATCHES', 'w-16'], ['SYMBOLS', 'w-[54px]']]} />
    <div className="flex pt-[7px] pl-1.5">
      <button aria-label="Fill and stroke color" className="w-8 h-[68px]">
        <svg width="32" height="68" viewBox="0 0 32 68">
          <rect x="10.500" y="10.500" width="18" height="18" fill="#222" stroke="#fff" />
          <rect x="15.500" y="15.500" width="8" height="8" fill="#d6d6d6" stroke="#fff" />
          <rect x="1.500" y="1.500" width="18" height="18" fill="#fff" stroke="#000" />
          <path d="M2 19L19 2" stroke="#c8102e" strokeWidth="2" />
          <path d="M7.500 56v-5" stroke="#000" strokeWidth="2" />
          <path d="M5 53l2.500-3 2.500 3z" fill="#000" />
          <path d="M8 56.500h7" stroke="#000" strokeDasharray="2 1" />
          <rect x="17.500" y="51.500" width="12" height="12" fill="#fff" stroke="#000" />
        </svg>
      </button>
      <div className="ml-1.5 flex flex-col">
        {channels.map((c) => (
          <div key={c} className="h-[22px] flex items-start">
            <label htmlFor={`ch-${c}`} className="w-3 leading-[19px]">{c}</label>
            <input
              id={`ch-${c}`}
              type="range"
              className="appearance-none w-[101px] h-[7px] mt-1.5 bg-[#cfcfcf] border border-black outline outline-1 outline-white [&::-webkit-slider-thumb]:appearance-none [&::-webkit-slider-thumb]:w-0"
            />
            <input aria-label={`${c} value`} className="ml-[5px] w-[35px] h-[18px] bg-white border border-[#888]" />
          </div>
        ))}
      </div>
    </div>
    <div className="ml-[5px] mt-px w-[200px] h-[17px] border border-black flex">
      <button aria-label="No color" className="w-4 bg-white border-r border-black"><NoneLine /></button>
      <div className="flex-1 bg-[linear-gradient(rgba(255,255,255,.85),rgba(255,255,255,0)_45%,rgba(0,0,0,0)_55%,rgba(0,0,0,.85)),linear-gradient(90deg,#f00,#ff0_17%,#0f0_33%,#0ff_50%,#00f_67%,#f0f_83%,#f00)]"></div>
      <div className="w-4 bg-[linear-gradient(#fff_50%,#000_50%)]"></div>
    </div>
  </section>
);

const Eye = ({ color = '#111' }) => (
  <svg width="13" height="10" viewBox="0 0 13 10" fill="none">
    <path d="M1 5c3-4 8-4 11 0-3 4-8 4-11 0z" fill="#ccc" stroke={color} strokeWidth="1.500" />
    <circle cx="6.500" cy="5" r="2.500" fill={color} />
    <path d="M2 2l1 1M6 0v2M11 2l-1 1" stroke={color} />
  </svg>
);

const trash = <g><path d="M3 4h8v9H3z" fill="#ccc" stroke="#777" /><path d="M2 3.500h10M5 2l5-1M5.500 5v7M8.500 5v7" stroke="#666" /></g>;
const newPage = <g><path d="M2 2h10v10H2z" fill="#eee" /><path d="M2.500 12.500h10V2" fill="none" stroke="#333" strokeWidth="1.500" /><path d="M5 5h4v5z" fill="#777" /></g>;

const FooterButton = ({ label, children, className = '' }) => (
  <button aria-label={label} className={className}>
    <svg width="14" height="14" viewBox="0 0 14 14">{children}</svg>
  </button>
);

const AppearancePanel = () => (
  <section>
    <PanelTabs tabs={[['APPEARANCE', 'w-[79px]'], ['GRAPHIC STYLES', 'w-[95px]']]} />
    <div className="mt-px mx-0.5 border-t border-black flex h-[225px]">
      <div className="flex-1 border-b border-black">
        <div className="h-6 border-b border-black border-t border-t-white flex items-center">
          <span className="ml-0.5 w-5 h-5 bg-white border border-black"></span>
          <span className="ml-3 text-[9px] font-bold font-['DejaVu_Sans',sans-serif]">Group</span>
        </div>
        <div className="h-6 border-t border-white flex items-center pl-[34px]">Contents</div>
        <div className="h-6 border-t border-white border-b border-b-black flex items-center">
          <button aria-label="Toggle visibility" className="ml-1 w-[13px] h-[18px] border border-[#999] flex items-center"><Eye color="#777" /></button>
          <span className="ml-1 w-px h-full bg-black"></span>
          <a href="#opacity" className="ml-[13px] leading-[13px] text-[#1414f0] border-b border-dotted border-[#1414f0]">Opacity:</a>
          <span className="ml-1.5">Default</span>
        </div>
      </div>
      <VerticalScroll color="#bbb" className="w-[15px]" />
    </div>
    <div className="h-[17px] flex items-center pl-[11px] pr-0.5">
      <FooterButton label="Add stroke"><rect x="4" y="4" width="6" height="6" fill="#ddd" stroke="#444" strokeWidth="3" /></FooterButton>
      <FooterButton label="Add fill" className="ml-5"><rect x="2.500" y="2.500" width="9" height="9" fill="#fff" stroke="#222" /></FooterButton>
      <button className="ml-5 w-[18px] text-[14px] leading-none font-bold italic font-['Liberation_Serif',serif]">fx<span className="text-[9px]">.</span></button>
      <FooterButton label="Clear" className="ml-3.5"><circle cx="7" cy="7" r="4" fill="none" stroke="#888" /><path d="M4 4l6 6" stroke="#888" /></FooterButton>
      <FooterButton label="Duplicate" className="ml-5 opacity-60">{newPage}</FooterButton>
      <FooterButton label="Delete" className="ml-4">{trash}</FooterButton>
      <div className="ml-auto self-end"><Resizer /></div>
    </div>
  </section>
);

const TransparencyPanel = () => (
  <section>
    <PanelTabs sortable tabs={[['TRANSPARENCY', 'w-[104px]']]} />
    <div className="h-7 flex items-center pl-[7px]">
      <div className="relative w-[95px] h-[19px]">
        <select aria-label="Blending mode" className="appearance-none w-full h-full bg-white border border-[#777] pl-1 outline-none">
          <option>Normal</option>
        </select>
        <Chevron className="absolute right-1 top-2 pointer-events-none" />
      </div>
      <label htmlFor="t-opacity" className="ml-[7px] w-[39px]">Opacity:</label>
      <input id="t-opacity" defaultValue="100" className="ml-0.5 w-[29px] h-[19px] bg-white border border-[#a6a6ae] pl-1 outline-none" />
      <button aria-label="Transparency slider" className="w-4 h-[19px] bg-[#ececec] border border-l-0 border-[#a6a6ae] flex items-center justify-center"><Chevron className="-rotate-90" /></button>
      <span className="ml-0.5">%</span>
    </div>
  </section>
);

const LayersPanel = () => (
  <section className="flex-1 flex flex-col">
    <PanelTabs tabs={[['LAYERS', 'w-[50px]'], ['SEPARATIONS PREVIEW', 'w-[124px]']]} />
    <div className="mt-px mx-0.5 border-t border-black flex flex-1">
      <div className="flex-1 border-b border-black">
        <div className="h-5 border-b border-black flex items-center">
          <button aria-label="Toggle layer" className="ml-[3px] w-[13px]"><Eye /></button>
          <span className="ml-1 w-3 h-[14px] border border-[#aaa]"></span>
          <span className="ml-1 w-1 h-[14px] bg-[#4f80ff]"></span>
          <span className="ml-1 w-px h-full bg-black"></span>
          <button aria-label="Expand layer" className="ml-1">
            <svg width="7" height="11" viewBox="0 0 7 11"><path d="M1 1v9l5-4.500z" fill="#fff" stroke="#888" /></svg>
          </button>
          <div className="ml-1 flex-1 h-full bg-[#0078d7] flex items-center text-white text-[9px] font-bold">
            <svg width="17" height="16" viewBox="0 0 17 16" className="ml-0.5">
              <rect x="0.500" y="0.500" width="16" height="15" fill="#fff" stroke="#000" />
              <path d="M3 6.500h7v3h4M3 9.500h7" fill="none" stroke="#aaa" />
            </svg>
            <span className="ml-[5px] flex-1 font-['DejaVu_Sans',sans-serif]">Layer 1</span>
            <button aria-label="Target layer" className="mr-1">
              <svg width="10" height="10"><circle cx="5" cy="5" r="4" fill="none" stroke="#8ecbff" /></svg>
            </button>
            <span className="w-2 h-2 mr-px bg-[#4f80ff] border border-white"></span>
          </div>
        </div>
      </div>
      <VerticalScroll color="#bbb" className="w-4" />
    </div>
    <div className="h-4 flex items-center pl-[11px]">
      <span className="flex-1">1 Layer</span>
      <FooterButton label="Make clipping mask"><path d="M1 2h8v7H1z" fill="none" stroke="#555" strokeDasharray="1 1" /><circle cx="9" cy="8" r="4" fill="#ddd" stroke="#333" /><path d="M9 8V4a4 4 0 0 0-4 4z" fill="#111" /></FooterButton>
      <FooterButton label="Create sublayer" className="ml-4"><path d="M0 5.500h4M3 3l3 2.500L3 8z" fill="#222" stroke="#222" /><path d="M7 3h6v9H7z" fill="#eee" /><path d="M7 12.500h6.500V3" fill="none" stroke="#222" strokeWidth="1.500" /><path d="M8 6h3v4z" fill="#555" /></FooterButton>
      <FooterButton label="Create layer" className="ml-[18px]">{newPage}</FooterButton>
      <FooterButton label="Delete layer" className="ml-[17px] mr-[26px]">{trash}</FooterButton>
    </div>
  </section>
);

const App = () => (
  <div className="min-h-screen flex flex-col bg-[#cccccc]">
    {/* shared paint servers */}
    <svg width="0" height="0" className="absolute">
      <defs>
        <linearGradient id="toolShade" x1="0" y1="0" x2="1" y2="1">
          <stop offset="0" stopColor="#fff" />
          <stop offset="1" stopColor="#bbb" />
        </linearGradient>
        <linearGradient id="toolGradient">
          <stop offset="0" stopColor="#fff" />
          <stop offset="1" stopColor="#222" />
        </linearGradient>
      </defs>
    </svg>

    <div className="flex-1 flex flex-col bg-[#d6d6d6] border border-b-0 border-[#4f7a50]">
      <MenuBar />
      <ControlBar />
      <div className="flex-1 flex mx-[3px]">
        <Toolbox />
        <DocumentWindow />
        <div className="w-[252px] shrink-0 border-x border-[#333] flex flex-col">
          <div className="flex">
            <CollapseBar className="w-9 justify-end pr-[3px]" />
            <CollapseBar right className="flex-1 justify-end pr-[3px]" />
          </div>
          <div className="flex-1 flex">
            <IconDock />
            <div className={`flex-1 min-w-0 flex flex-col text-[10px] leading-[13px] text-black ${uiFont}`}>
              <NavigatorPanel />
              <Divider />
              <ColorPanel />
              <Divider />
              <AppearancePanel />
              <Divider />
              <TransparencyPanel />
              <Divider />
              <LayersPanel />
            </div>
          </div>
        </div>
      </div>
    </div>
    <footer className="h-[46px] shrink-0"></footer>
  </div>
);

export default App;
